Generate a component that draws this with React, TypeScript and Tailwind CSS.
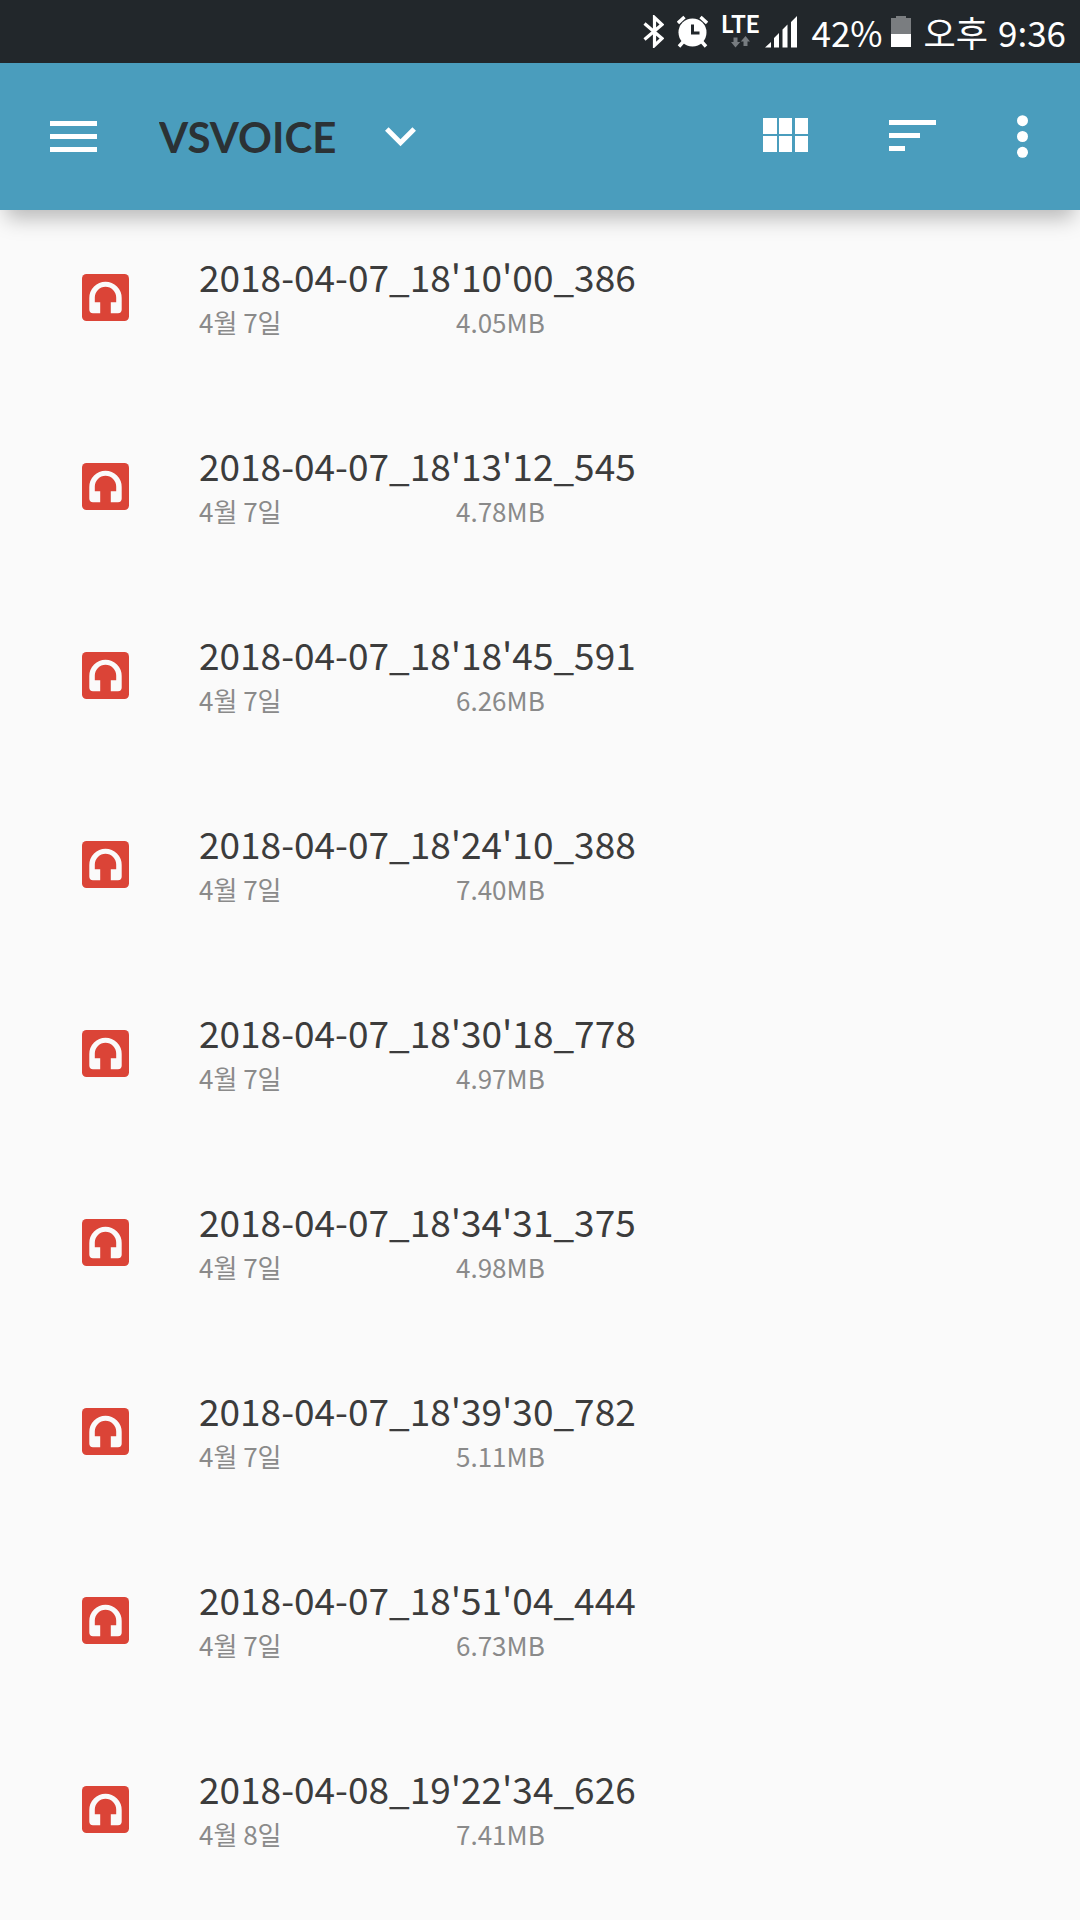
interface Recording {
  name: string;
  date: string;
  size: string;
}

const recordings: Recording[] = [
  { name: "2018-04-07_18'10'00_386", date: '4월 7일', size: '4.05MB' },
  { name: "2018-04-07_18'13'12_545", date: '4월 7일', size: '4.78MB' },
  { name: "2018-04-07_18'18'45_591", date: '4월 7일', size: '6.26MB' },
  { name: "2018-04-07_18'24'10_388", date: '4월 7일', size: '7.40MB' },
  { name: "2018-04-07_18'30'18_778", date: '4월 7일', size: '4.97MB' },
  { name: "2018-04-07_18'34'31_375", date: '4월 7일', size: '4.98MB' },
  { name: "2018-04-07_18'39'30_782", date: '4월 7일', size: '5.11MB' },
  { name: "2018-04-07_18'51'04_444", date: '4월 7일', size: '6.73MB' },
  { name: "2018-04-08_19'22'34_626", date: '4월 8일', size: '7.41MB' },
];

function StatusBar() {
  return (
    <div className="flex h-[63px] items-center justify-end bg-[#22272b] pr-[14px] text-[35px] leading-none text-white">
      <svg className="mr-[13px] h-[33px] w-[21px]" viewBox="0 0 21 33" fill="none" stroke="currentColor" strokeWidth="3.2">
        <path d="M1.5 8.5 19 23.5 11.5 30.5V2.5L19 9.5 1.5 24.5" />
      </svg>
      <svg className="mr-[13px] h-[33px] w-[31px]" viewBox="0 0 31 33">
        <circle cx="15.5" cy="17.5" r="14" fill="currentColor" />
        <path d="M1 8 7.5 2M30 8 23.5 2M6 27l-4 4.5M25 27l4 4.5" fill="none" stroke="currentColor" strokeWidth="3.4" />
        <path d="M15.5 9.5V18H22.5" fill="none" stroke="#22272b" strokeWidth="3" />
      </svg>
      <div className="mr-[6px] flex flex-col items-center gap-[3px]">
        <span className="font-['Lato',sans-serif] text-[24px] leading-[18px] font-bold">LTE</span>
        <svg className="h-[12px] w-[19px]" viewBox="0 0 19 12" fill="#777c80">
          <path d="M2.5 1.5h4V6H9.2L4.5 11.5 0 6h2.5ZM12.5 10V5.5H9.8L14.5 0 19 5.5h-2.5V10Z" />
        </svg>
      </div>
      <svg className="mr-[14px] h-[33px] w-[32px]" viewBox="0 0 32 33" fill="currentColor">
        <path d="M0 32.5 6 27v5.5ZM9 23l5-5v14.5H9ZM17.5 14.5l5-5v23h-5ZM26 7l6-6v31.5h-6Z" />
      </svg>
      <span className="mr-[8px]">42%</span>
      <svg className="mr-[13px] h-[33px] w-[20px]" viewBox="0 0 20 33">
        <path d="M5 1h10v2h5v16H0V3h5Z" fill="#7a7d80" />
        <path d="M0 19h20v13H0Z" fill="currentColor" />
      </svg>
      <span className="mr-[10px]">오후</span>
      <span>9:36</span>
    </div>
  );
}

function Toolbar() {
  return (
    <header className="relative flex h-[147px] items-center bg-[#4a9dbd] pr-[52px] pl-[50px] text-white shadow-[0_14px_20px_-6px_rgba(0,0,0,0.27)]">
      <button type="button" aria-label="메뉴" className="mr-[62px]">
        <svg className="block h-[31px] w-[47px]" viewBox="0 0 47 31" fill="currentColor">
          <path d="M0 0h47v5H0ZM0 13h47v5H0ZM0 26h47v5H0Z" />
        </svg>
      </button>
      <label className="flex items-center gap-12">
        <select aria-label="폴더" className="appearance-none bg-transparent font-['Lato',sans-serif] text-[42px] leading-[54px] font-bold text-[#2b3235]">
          <option>VSVOICE</option>
        </select>
        <svg className="h-[20px] w-[31px]" viewBox="0 0 31 20" fill="none" stroke="currentColor" strokeWidth="5">
          <path d="M1.8 2 15.5 15.7 29.2 2" />
        </svg>
      </label>
      <div className="ml-auto flex items-center gap-[81px]">
        <button type="button" aria-label="보기 방식">
          <svg className="block h-[37px] w-[45px]" viewBox="0 0 45 37" fill="currentColor">
            <path d="M0 0h14v16H0ZM16 0h13v16H16ZM32 0h13v16H32ZM0 18h14v16H0ZM16 18h13v16H16ZM32 18h13v16H32Z" />
          </svg>
        </button>
        <button type="button" aria-label="정렬">
          <svg className="block h-[33px] w-[47px]" viewBox="0 0 47 33" fill="currentColor">
            <path d="M0 0h47v5H0ZM0 13h31v5H0ZM0 26h16v5H0Z" />
          </svg>
        </button>
        <button type="button" aria-label="더보기">
          <svg className="block h-[43px] w-[11px]" viewBox="0 0 11 43" fill="currentColor">
            <circle cx="5.5" cy="5.7" r="5.5" />
            <circle cx="5.5" cy="21.5" r="5.5" />
            <circle cx="5.5" cy="37.3" r="5.5" />
          </svg>
        </button>
      </div>
    </header>
  );
}

function AudioIcon() {
  return (
    <svg className="h-[47px] w-[47px] shrink-0" viewBox="0 0 47 47">
      <rect width="47" height="47" rx="4.5" fill="#db4437" />
      <path
        d="M23.5 7.7A16.2 16.2 0 0 0 7.3 23.9V35.5A3.7 3.7 0 0 0 11 39.2H18.2V28.3H12.8V23.5A10.7 10.7 0 0 1 34.2 23.5V28.3H28.8V39.2H36A3.7 3.7 0 0 0 39.7 35.5V23.9A16.2 16.2 0 0 0 23.5 7.7Z"
        fill="#fafafa"
      />
    </svg>
  );
}

function RecordingRow({ name, date, size }: Recording) {
  return (
    <li className="flex items-center pt-[38px] pr-8 pb-[53px] pl-[82px]">
      <AudioIcon />
      <div className="ml-[70px] grow pt-[6px]">
        <p className="text-[37px] leading-[44px] text-[#3c3c3c]">{name}</p>
        <div className="flex text-[26px] leading-[48px] text-[#8a8a8a]">
          <span className="w-[257px]">{date}</span>
          <span>{size}</span>
        </div>
      </div>
    </li>
  );
}

export default function App() {
  return (
    <div className="min-h-screen bg-[#fafafa] font-['Noto_Sans_CJK_KR',sans-serif]">
      <StatusBar />
      <Toolbar />
      <ul>
        {recordings.map((recording) => (
          <RecordingRow key={recording.name} {...recording} />
        ))}
      </ul>
    </div>
  );
}
